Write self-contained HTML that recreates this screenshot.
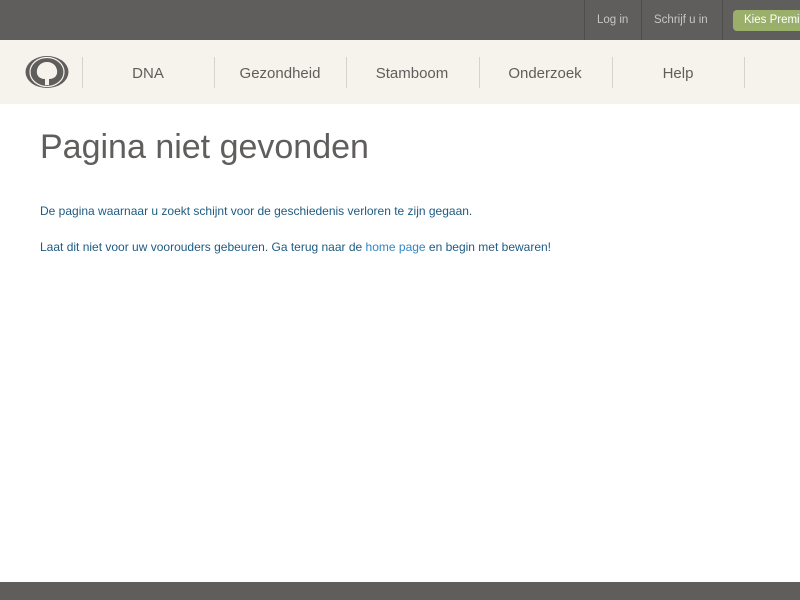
<!DOCTYPE html>
<html><head><meta charset="utf-8"><style>
*{margin:0;padding:0;box-sizing:border-box}
body{width:800px;height:600px;overflow:hidden;background:#fff;font-family:"Liberation Sans",sans-serif;position:relative}
.top{position:absolute;top:0;left:0;width:800px;height:40px;background:#5f5e5c}
.top .sep{position:absolute;top:0;width:1px;height:40px;background:#4e4d4b}
.top .l{position:absolute;top:14px;font-size:11.5px;color:#c8c6c2;white-space:nowrap}
.btn{position:absolute;left:733px;top:10px;width:90px;height:21px;background:#9ab06a;border-radius:4px;color:#fff;font-size:11.5px;padding:4px 0 0 11px;white-space:nowrap}
.nav{position:absolute;top:40px;left:0;width:800px;height:64px;background:#f6f3ec}
.nav .d{position:absolute;top:17px;width:1px;height:31px;background:#d6d3cc}
.nav .t{position:absolute;top:25px;font-size:15px;color:#5f5e5c;width:132px;text-align:center}
h1{position:absolute;left:40px;top:128px;font-size:34px;font-weight:normal;color:#5f5e5c}
p{position:absolute;left:40px;font-size:12px;color:#1e5b82;white-space:nowrap}
a{color:#2f87c2;text-decoration:none}
.foot{position:absolute;left:0;top:582px;width:800px;height:18px;background:#5f5e5c}
</style></head><body>
<div class="top">
<div class="sep" style="left:584px"></div><div class="sep" style="left:641px"></div><div class="sep" style="left:722px"></div>
<span class="l" style="left:597px">Log in</span><span class="l" style="left:654px">Schrijf u in</span>
<div class="btn">Kies Premium</div>
</div>
<div class="nav">
<svg style="position:absolute;left:25px;top:16px" width="44" height="32" viewBox="0 0 44 32">
<ellipse cx="22" cy="16" rx="21.5" ry="16" fill="#5f5e5c"/>
<ellipse cx="22" cy="16" rx="17" ry="14.5" fill="none" stroke="#f6f3ec" stroke-width="1.2"/>
<path d="M20 29 L20 23 C14 23 11 19 12 14 C13 9 17 6 22 6 C27 6 31 9 32 14 C33 19 30 23 24 23 L24 29 Z" fill="#f6f3ec"/>
</svg>
<div class="d" style="left:82px"></div><div class="d" style="left:214px"></div><div class="d" style="left:346px"></div><div class="d" style="left:479px"></div><div class="d" style="left:612px"></div><div class="d" style="left:744px"></div>
<div class="t" style="left:82px">DNA</div><div class="t" style="left:214px">Gezondheid</div><div class="t" style="left:346px">Stamboom</div><div class="t" style="left:479px">Onderzoek</div><div class="t" style="left:612px">Help</div>
</div>
<h1>Pagina niet gevonden</h1>
<p style="top:204px">De pagina waarnaar u zoekt schijnt voor de geschiedenis verloren te zijn gegaan.</p>
<p style="top:240px">Laat dit niet voor uw voorouders gebeuren. Ga terug naar de <a>home page</a> en begin met bewaren!</p>
<div class="foot"></div>
</body></html>
